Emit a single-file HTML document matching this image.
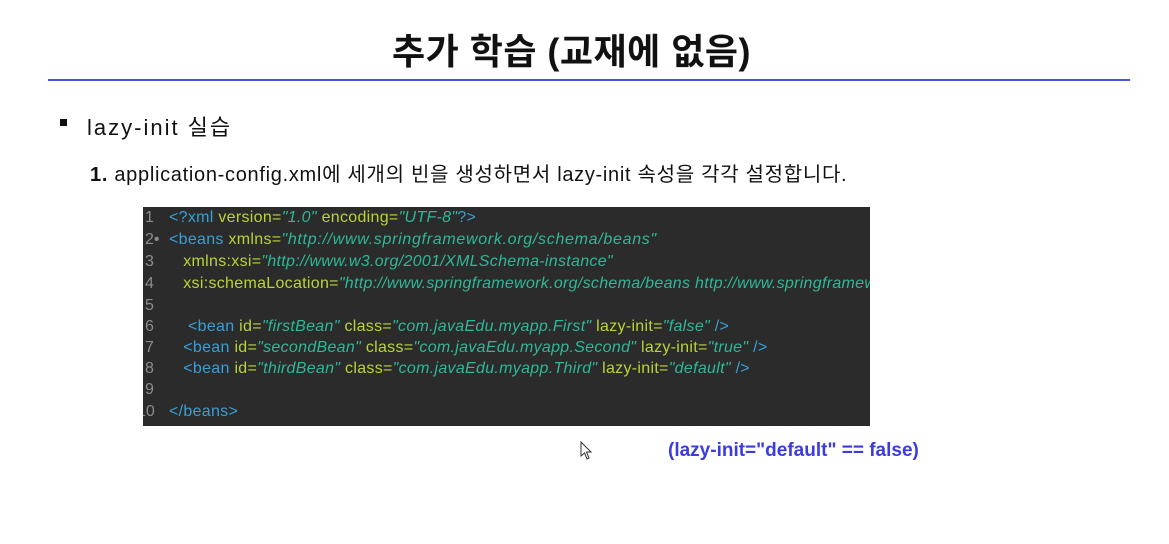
<!DOCTYPE html>
<html><head><meta charset="utf-8"><style>
body{margin:0;width:1169px;height:544px;background:#fff;position:relative;overflow:hidden;font-family:"Liberation Sans","Noto Sans CJK KR",sans-serif;color:#111}
.t{position:absolute;white-space:nowrap}
#title{left:-13px;width:1169px;text-align:center;top:23px;font-size:36px;font-weight:bold;letter-spacing:0.5px}
#rule{position:absolute;left:48px;top:79px;width:1082px;height:2px;background:#4a55dd}
#bul{left:60px;top:119px;width:7px;height:7px;background:#111;position:absolute}
#code{position:absolute;left:143px;top:207px;width:727px;height:219px;background:#2b2b2b;overflow:hidden;font-size:16px;letter-spacing:0.3px}
.l{position:absolute;left:0;white-space:nowrap}
.n{color:#8c8c8c;display:inline-block;width:24px;padding-left:2px;letter-spacing:0}
.g{color:#3a9fd6}.a{color:#b8d43a}.s{color:#2fb898;font-style:italic}
</style></head><body>
<div class="t" id="title">추가 학습 (교재에 없음)</div>
<div id="rule"></div>
<div id="bul"></div>
<div class="t" style="left:87px;top:110px;font-size:22px;letter-spacing:2px">lazy-init 실습</div>
<div class="t" style="left:90px;top:158px;font-size:20px;letter-spacing:0.7px"><b>1.</b> application-config.xml에 세개의 빈을 생성하면서 lazy-init 속성을 각각 설정합니다.</div>
<div id="code">
<div class="l" style="top:2px"><span class="n">1</span><span class="g">&lt;?xml</span> <span class="a">version=</span><span class="s">"1.0"</span> <span class="a">encoding=</span><span class="s">"UTF-8"</span><span class="g">?&gt;</span></div>
<div class="l" style="top:24px"><span class="n">2•</span><span class="g">&lt;beans</span> <span class="a">xmlns=</span><span class="s" style="letter-spacing:0.7px">"http://www.springframework.org/schema/beans"</span></div>
<div class="l" style="top:46px"><span class="n">3</span>&nbsp;&nbsp;&nbsp;<span class="a">xmlns:xsi=</span><span class="s">"http://www.w3.org/2001/XMLSchema-instance"</span></div>
<div class="l" style="top:68px"><span class="n">4</span>&nbsp;&nbsp;&nbsp;<span class="a">xsi:schemaLocation=</span><span class="s">"http://www.springframework.org/schema/beans http://www.springframework.org</span></div>
<div class="l" style="top:90px"><span class="n">5</span></div>
<div class="l" style="top:111px"><span class="n">6</span>&nbsp;&nbsp;&nbsp;&nbsp;<span class="g">&lt;bean</span> <span class="a">id=</span><span class="s">"firstBean"</span> <span class="a">class=</span><span class="s">"com.javaEdu.myapp.First"</span> <span class="a">lazy-init=</span><span class="s">"false"</span> <span class="g">/&gt;</span></div>
<div class="l" style="top:132px"><span class="n">7</span>&nbsp;&nbsp;&nbsp;<span class="g">&lt;bean</span> <span class="a">id=</span><span class="s">"secondBean"</span> <span class="a">class=</span><span class="s">"com.javaEdu.myapp.Second"</span> <span class="a">lazy-init=</span><span class="s">"true"</span> <span class="g">/&gt;</span></div>
<div class="l" style="top:153px"><span class="n">8</span>&nbsp;&nbsp;&nbsp;<span class="g">&lt;bean</span> <span class="a">id=</span><span class="s">"thirdBean"</span> <span class="a">class=</span><span class="s">"com.javaEdu.myapp.Third"</span> <span class="a">lazy-init=</span><span class="s">"default"</span> <span class="g">/&gt;</span></div>
<div class="l" style="top:174px"><span class="n">9</span></div>
<div class="l" style="top:196px"><span class="n" style="margin-left:-8px;width:32px">10</span><span class="g">&lt;/beans&gt;</span></div>
</div>
<svg style="position:absolute;left:580px;top:441px" width="14" height="20" viewBox="0 0 14 20"><path d="M1 1 L1 15 L4.5 12 L7 18 L9 17 L6.5 11 L11 11 Z" fill="#fff" stroke="#333" stroke-width="1"/></svg>
<div class="t" style="left:668px;top:440px;font-size:19px;font-weight:bold;color:#3b3be0">(lazy-init="default" == false)</div>
</body></html>
